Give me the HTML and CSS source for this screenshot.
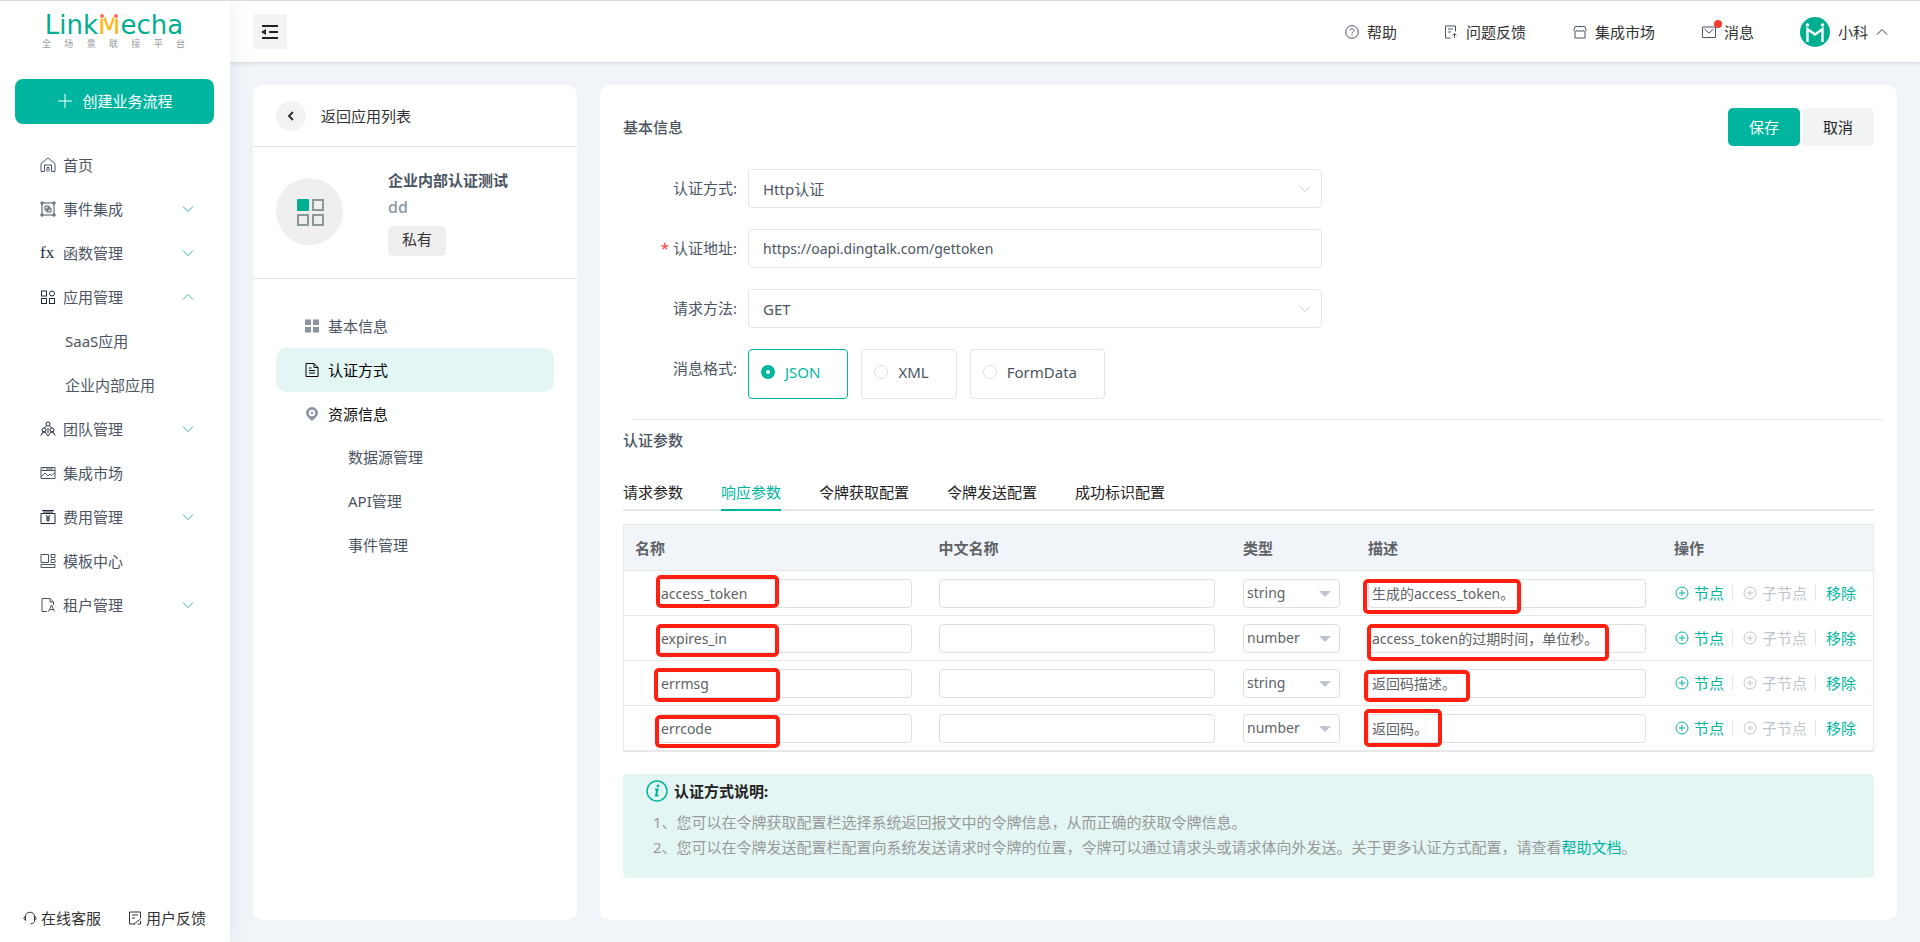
FILE: index.html
```html
<!DOCTYPE html>
<html lang="zh-CN">
<head>
<meta charset="utf-8">
<title>LinkMecha</title>
<link rel="stylesheet" href="styles.css">
</head>
<body>
<svg class="sprite" aria-hidden="true">
  <symbol id="down" viewBox="0 0 12 8"><path d="M1 1.500l5 5 5-5"/></symbol>
  <symbol id="up" viewBox="0 0 12 8"><path d="M1 6.500l5-5 5 5"/></symbol>
  <symbol id="plus-circle" viewBox="0 0 14 14"><circle cx="7" cy="7" r="6"/><path d="M7 4v6M4 7h6"/></symbol>
</svg>
<aside class="sidebar">
  <div class="logo">
    <div class="logo-name">Link<span class="logo-m">M</span>echa</div>
    <div class="logo-tag"><span>全</span><span>场</span><span>景</span><span>联</span><span>接</span><span>平</span><span>台</span></div>
  </div>
  <button class="create" type="button"><svg class="i14" viewBox="0 0 14 14"><path d="M7 0v14M0 7h14"/></svg>创建业务流程</button>
  <nav class="nav">
    <a href="#"><svg class="i16" viewBox="0 0 16 16"><path d="M1 6.500L8 1l7 5.500V14.500h-3.500V8h-7v6.500H1zM7 14.500v-4h2v4"/></svg>首页</a>
    <a href="#"><svg class="i16" viewBox="0 0 16 16"><path d="M3 2h10M3 14h10M2 3v10M14 3v10M1 1h2v2H1zM13 1h2v2h-2zM1 13h2v2H1zM13 13h2v2h-2zM5 5h4v4H5zM7 7h4v4H7z"/></svg>事件集成<svg class="chev"><use href="#down"/></svg></a>
    <a href="#"><span class="fx">fx</span>函数管理<svg class="chev"><use href="#down"/></svg></a>
    <a href="#"><svg class="i16 dark" viewBox="0 0 16 16"><rect x="1.500" y="2" width="5" height="5"/><circle cx="12" cy="4.500" r="2.500"/><rect x="1.500" y="9.500" width="5" height="5"/><rect x="9.500" y="9.500" width="5" height="5"/></svg>应用管理<svg class="chev"><use href="#up"/></svg></a>
    <a class="sub" href="#">SaaS应用</a>
    <a class="sub" href="#">企业内部应用</a>
    <a href="#"><svg class="i16 dark" viewBox="0 0 16 16"><circle cx="8" cy="3" r="2"/><circle cx="4" cy="9" r="2"/><circle cx="12" cy="9" r="2"/><path d="M6.500 4.500L4.500 7M9.500 4.500l2 2.500M1 14.500l2-3.500h2l3 4 3-4h2l2 3.500M8 7v5"/></svg>团队管理<svg class="chev"><use href="#down"/></svg></a>
    <a href="#"><svg class="i16" viewBox="0 0 16 16"><path d="M1 2.500h14v11H1zM1 5.500h14M3 4h1M6 4h7M1 12l4-4 3 3 2-2 1.500 1.500L15 7.500"/></svg>集成市场</a>
    <a href="#"><svg class="i16 dark" viewBox="0 0 16 16"><path d="M2 1.500h12M3 3h10M1 4.500h14v10H1zM6 6l2 2.500L10 6M8 8.500V13M6 9h4M6 11h4"/></svg>费用管理<svg class="chev"><use href="#down"/></svg></a>
    <a href="#"><svg class="i16" viewBox="0 0 16 16"><path d="M1 1.500h7.500v8H1zM11 1.500h4v3h-4zM11 6.500h4v3h-4zM1 11.500h14v3H1z"/></svg>模板中心</a>
    <a href="#"><svg class="i16" viewBox="0 0 16 16"><path d="M7 14.500H2v-13h8l3.500 3.500v3M10 1.500V5h3.500M8.500 14.500L11.500 8l3 6.500M9.500 12.500h4"/></svg>租户管理<svg class="chev"><use href="#down"/></svg></a>
  </nav>
  <div class="side-foot">
    <a href="#"><svg class="i14" viewBox="0 0 14 14"><path d="M2.500 9.500L.7 7.300 2.500 5C3 0 11 0 11.500 5l1.800 2.300-1.800 2.200c0 2-1.500 3.300-4 3.300M2.500 5v4.500M11.500 5v4.500"/></svg>在线客服</a>
    <a href="#"><svg class="i14" viewBox="0 0 14 14"><path d="M7 13H1.500V1h11v6M4 4h6M4 7h3M6 13l6.500-5M9.500 13H12.500v-3"/></svg>用户反馈</a>
  </div>
</aside>
<div class="page">
  <header class="top">
    <button class="fold" type="button" aria-label="收起菜单"><svg viewBox="0 0 18 14"><path d="M1 1h16M8 7h9M1 13h16"/><path class="solid" d="M0 7l5-3v6z"/></svg></button>
    <nav class="top-nav">
      <a href="#"><svg class="i14" viewBox="0 0 14 14"><circle cx="7" cy="7" r="6.300"/><path d="M5 5.500C5 3 9 3 9 5.500 9 7 7 7 7 8.500M7 9.700v1"/></svg>帮助</a>
      <a href="#"><svg class="i14" viewBox="0 0 14 14"><path d="M6.500 13H1.500V1h10v5.500M4 4h5M4 7h3M10.500 13V8.500M8.500 10.500l2-2 2 2"/></svg>问题反馈</a>
      <a href="#"><svg class="i14" viewBox="0 0 14 14"><path d="M2 1.500h10l1 3.500c0 2-3 2-3 0 0 2-3 2-3 0 0 2-3 2-3 0 0 2-3 2-3 0zM2 7v6h10V7"/></svg>集成市场</a>
      <a class="msg" href="#"><svg class="i14" viewBox="0 0 14 14"><path d="M.5 2h13v10.500H.5zM2.500 4L7 8l4.500-4"/></svg>消息</a>
    </nav>
    <button class="user" type="button">
      <svg class="avatar" viewBox="0 0 30 30"><circle class="disc" cx="15" cy="15" r="15"/><path d="M7.500 25V12l7.500 5.500 7.500-5.500v13"/><circle class="head" cx="7.500" cy="8" r="1.800"/><circle class="head" cx="22.500" cy="8" r="1.800"/></svg>小科<svg class="chev"><use href="#up"/></svg>
    </button>
  </header>
  <div class="content">
    <section class="panel app">
      <div class="back">
        <button class="back-btn" type="button" aria-label="返回"><svg viewBox="0 0 8 10"><path d="M6 1L2 5l4 4"/></svg></button>返回应用列表
      </div>
      <div class="summary">
        <div class="app-icon"><svg viewBox="0 0 28 28"><rect class="on" x="1" y="1" width="12" height="12" rx="1"/><rect x="17" y="2" width="10" height="10"/><rect x="2" y="17" width="10" height="10"/><rect x="17" y="17" width="10" height="10"/></svg></div>
        <div class="app-text">
          <h2>企业内部认证测试</h2>
          <p>dd</p>
          <span class="tag">私有</span>
        </div>
      </div>
      <nav class="menu">
        <a href="#"><svg class="i14 fill" viewBox="0 0 14 14"><path d="M0 .5h6v5.500H0zM8 .5h6v5.500H8zM0 8h6v5.500H0zM8 8h6v5.500H8z"/></svg>基本信息</a>
        <a class="active" href="#"><svg class="i14" viewBox="0 0 14 14"><path d="M1 .5h8l4 4v9H1zM9 .5v4h4M4 5h2.500M4 7.500h6M4 10h6"/></svg>认证方式</a>
        <a class="strong" href="#"><svg class="i14 fill" viewBox="0 0 14 14"><path fill-rule="evenodd" d="M7 0a6 6 0 0 1 6 6c0 3-3 5-6 8-3-3-6-5-6-8a6 6 0 0 1 6-6zM7 2.800a3.200 3.200 0 1 0 0 6.400 3.200 3.200 0 0 0 0-6.400z"/><circle cx="7" cy="6" r="1.200"/></svg>资源信息</a>
        <a class="sub" href="#">数据源管理</a>
        <a class="sub" href="#">API管理</a>
        <a class="sub" href="#">事件管理</a>
      </nav>
    </section>
    <main class="panel main">
      <div class="head">
        <h1>基本信息</h1>
        <div class="actions"><button class="save" type="button">保存</button><button class="cancel" type="button">取消</button></div>
      </div>
      <form class="form">
        <div class="row"><label for="auth">认证方式:</label><div class="pick"><select id="auth"><option>Http认证</option></select><svg class="chev"><use href="#down"/></svg></div></div>
        <div class="row"><label class="req" for="url">认证地址:</label><input class="text" id="url" type="text" value="https://oapi.dingtalk.com/gettoken"></div>
        <div class="row"><label for="method">请求方法:</label><div class="pick"><select id="method"><option>GET</option></select><svg class="chev"><use href="#down"/></svg></div></div>
        <div class="row"><span class="label">消息格式:</span>
          <div class="cards">
            <label><input type="radio" name="format" checked><span>JSON</span></label>
            <label><input type="radio" name="format"><span>XML</span></label>
            <label><input type="radio" name="format"><span>FormData</span></label>
          </div>
        </div>
      </form>
      <section class="params">
        <h2>认证参数</h2>
        <div class="tabs" role="tablist">
          <button type="button" role="tab">请求参数</button><button class="active" type="button" role="tab" aria-selected="true">响应参数</button><button type="button" role="tab">令牌获取配置</button><button type="button" role="tab">令牌发送配置</button><button type="button" role="tab">成功标识配置</button>
        </div>
        <table>
          <colgroup><col class="c-name"><col class="c-name"><col class="c-type"><col class="c-desc"><col></colgroup>
          <thead><tr><th>名称</th><th>中文名称</th><th>类型</th><th>描述</th><th>操作</th></tr></thead>
          <tbody>
            <tr>
              <td><div class="cell key"><input type="text" aria-label="名称" value="access_token"><i class="mark m1"></i></div></td>
              <td><div class="cell"><input type="text" aria-label="中文名称"></div></td>
              <td><div class="cell type"><select aria-label="类型"><option>string</option></select></div></td>
              <td><div class="cell"><input type="text" aria-label="描述" value="生成的access_token。"><i class="mark d1"></i></div></td>
              <td><div class="ops"><button type="button"><svg class="i14"><use href="#plus-circle"/></svg>节点</button><button type="button" disabled><svg class="i14"><use href="#plus-circle"/></svg>子节点</button><button type="button">移除</button></div></td>
            </tr>
            <tr>
              <td><div class="cell key"><input type="text" aria-label="名称" value="expires_in"><i class="mark m2"></i></div></td>
              <td><div class="cell"><input type="text" aria-label="中文名称"></div></td>
              <td><div class="cell type"><select aria-label="类型"><option>number</option></select></div></td>
              <td><div class="cell"><input type="text" aria-label="描述" value="access_token的过期时间，单位秒。"><i class="mark d2"></i></div></td>
              <td><div class="ops"><button type="button"><svg class="i14"><use href="#plus-circle"/></svg>节点</button><button type="button" disabled><svg class="i14"><use href="#plus-circle"/></svg>子节点</button><button type="button">移除</button></div></td>
            </tr>
            <tr>
              <td><div class="cell key"><input type="text" aria-label="名称" value="errmsg"><i class="mark m3"></i></div></td>
              <td><div class="cell"><input type="text" aria-label="中文名称"></div></td>
              <td><div class="cell type"><select aria-label="类型"><option>string</option></select></div></td>
              <td><div class="cell"><input type="text" aria-label="描述" value="返回码描述。"><i class="mark d3"></i></div></td>
              <td><div class="ops"><button type="button"><svg class="i14"><use href="#plus-circle"/></svg>节点</button><button type="button" disabled><svg class="i14"><use href="#plus-circle"/></svg>子节点</button><button type="button">移除</button></div></td>
            </tr>
            <tr>
              <td><div class="cell key"><input type="text" aria-label="名称" value="errcode"><i class="mark m4"></i></div></td>
              <td><div class="cell"><input type="text" aria-label="中文名称"></div></td>
              <td><div class="cell type"><select aria-label="类型"><option>number</option></select></div></td>
              <td><div class="cell"><input type="text" aria-label="描述" value="返回码。"><i class="mark d4"></i></div></td>
              <td><div class="ops"><button type="button"><svg class="i14"><use href="#plus-circle"/></svg>节点</button><button type="button" disabled><svg class="i14"><use href="#plus-circle"/></svg>子节点</button><button type="button">移除</button></div></td>
            </tr>
          </tbody>
        </table>
        <div class="notice">
          <h3><svg viewBox="0 0 22 22"><circle cx="11" cy="11" r="10"/><path class="bold" d="M9 9.500h2.500L10 15.500h2.500"/><circle class="dot" cx="12" cy="6" r="1.400"/></svg>认证方式说明:</h3>
          <p>1、您可以在令牌获取配置栏选择系统返回报文中的令牌信息，从而正确的获取令牌信息。</p>
          <p>2、您可以在令牌发送配置栏配置向系统发送请求时令牌的位置，令牌可以通过请求头或请求体向外发送。关于更多认证方式配置，请查看<a href="#">帮助文档</a>。</p>
        </div>
      </section>
    </main>
  </div>
</div>
</body>
</html>
```
FILE: styles.css
```css
* { box-sizing: border-box; }
body {
  margin: 0;
  min-height: 100vh;
  display: flex;
  border-top: 1px solid #d9d9d9;
  background: #f1f5fa;
  color: #4b5563;
  font: 15px/22px "Noto Sans", "Noto Sans CJK SC", sans-serif;
}
h1, h2, h3, p { margin: 0; font-size: 15px; font-weight: 500; }
a { color: inherit; text-decoration: none; }
button, input, select { font: inherit; color: inherit; margin: 0; }
button { border: 0; background: none; padding: 0; }
svg { flex: none; fill: none; stroke: currentColor; stroke-width: 1; }
.sprite { position: absolute; width: 0; height: 0; }
.i14 { width: 14px; height: 14px; }
.i16 { width: 16px; height: 16px; }
.dark { color: #1f2937; }
.chev { width: 12px; height: 8px; }
.fill { fill: #8a94a3; stroke: none; }

.sidebar {
  position: relative;
  flex: none;
  width: 230px;
  display: flex;
  flex-direction: column;
  background: #fff;
  box-shadow: 4px 0 20px rgba(20, 90, 80, .07);
}
.logo { padding: 10px 41px 0 39px; }
.logo-name {
  display: flex;
  justify-content: center;
  font: 400 26px/28px "DejaVu Sans", sans-serif;
  color: #00ae90;
}
.logo-m { position: relative; color: #fbb612; }
.logo-m::before, .logo-m::after {
  content: "";
  position: absolute;
  top: 3px;
  left: 2px;
  width: 4px;
  height: 4px;
  border-radius: 50%;
  background: #ff6b5e;
  box-shadow: 0 0 0 1px #fff;
}
.logo-m::after { left: auto; right: 2px; }
.logo-tag {
  display: flex;
  justify-content: space-between;
  padding: 0 4px 0 3px;
  font-size: 9px;
  line-height: 10px;
  color: #999;
}
.create {
  display: flex;
  align-items: center;
  justify-content: center;
  gap: 10px;
  height: 45px;
  margin: 30px 16px 19px 15px;
  padding: 0 0 2px 2px;
  border-radius: 8px;
  background: #00b59f;
  color: #fff;
}
.nav { flex: 1; }
.nav a {
  display: flex;
  align-items: center;
  gap: 7px;
  height: 44px;
  padding: 0 36px 0 40px;
}
.nav .sub { padding-left: 65px; }
.nav .chev { margin-left: auto; color: #2fb8a5; }
.fx { width: 16px; font: 17px/20px "Liberation Serif", serif; color: #1f2937; }
.side-foot {
  display: flex;
  justify-content: space-between;
  padding: 0 24px 13px 23px;
  color: #333;
}
.side-foot a { display: flex; align-items: center; gap: 4px; }

.page { flex: 1; min-width: 0; display: flex; flex-direction: column; }
.top {
  display: flex;
  align-items: center;
  justify-content: space-between;
  height: 61px;
  padding: 0 32px 0 23px;
  background: #fff;
  color: #333;
  box-shadow: 0 1px 4px rgba(0, 40, 40, .16);
}
.fold {
  display: grid;
  place-items: center;
  width: 34px;
  height: 35px;
  border-radius: 3px;
  background: #f1f3f5;
  color: #1f2328;
}
.fold svg { width: 18px; height: 14px; stroke-width: 2; }
.fold .solid { fill: currentColor; stroke: none; }
.top-nav { display: flex; gap: 47px; margin-left: auto; }
.top-nav a { display: flex; align-items: center; gap: 8px; }
.top-nav svg { color: #4b5563; }
.msg { position: relative; }
.msg::after {
  content: "";
  position: absolute;
  left: 12px;
  top: -1px;
  width: 8px;
  height: 8px;
  border-radius: 50%;
  background: #f23c30;
}
.user { display: flex; align-items: center; gap: 8px; margin-left: 46px; }
.avatar { width: 30px; height: 30px; color: #fff; stroke-width: 2.4; }
.avatar .disc { fill: #00ae90; stroke: none; }
.avatar .head { fill: #fff; stroke: none; }

.content { flex: 1; display: flex; gap: 23px; padding: 23px 23px 22px; }
.panel { border-radius: 10px; background: #fff; }
.app { flex: none; width: 324px; color: #4b5563; }
.back {
  display: flex;
  align-items: center;
  gap: 15px;
  height: 62px;
  padding: 0 23px;
  border-bottom: 1px solid #e1e3ea;
  color: #333;
}
.back-btn {
  display: grid;
  place-items: center;
  width: 30px;
  height: 30px;
  border-radius: 50%;
  background: #f1f3f5;
}
.back-btn svg { width: 8px; height: 10px; stroke-width: 2; }
.summary {
  display: flex;
  gap: 45px;
  padding: 22px 23px;
  border-bottom: 1px solid #e1e3ea;
}
.app-icon {
  display: grid;
  place-items: center;
  width: 67px;
  height: 67px;
  margin: 9px 0;
  border-radius: 50%;
  background: #efefef;
  color: #8c9896;
}
.app-icon svg { width: 28px; height: 28px; stroke-width: 2; }
.app-icon .on { fill: #00ae90; stroke: none; }
.app-text h2 { font-weight: 700; }
.app-text p { margin: 5px 0 8px; font-size: 16px; color: #8b96a5; }
.tag {
  display: inline-block;
  padding: 2px 14px 6px;
  border-radius: 5px;
  background: #efefef;
  color: #333;
}
.menu { padding: 25px 23px; }
.menu a {
  display: flex;
  align-items: center;
  gap: 9px;
  height: 44px;
  padding-left: 29px;
  border-radius: 10px;
}
.menu .active { background: #e3f6f4; color: #000; }
.menu .strong { height: 43px; color: #111; }
.menu .sub { padding-left: 72px; }

.main { flex: 1; min-width: 0; padding: 23px; }
.head { display: flex; align-items: center; justify-content: space-between; }
.head h1, .params h2 { font-weight: 500; }
.actions { display: flex; gap: 2px; }
.actions button { width: 72px; height: 38px; border-radius: 5px; }
.save { background: #00b59f; color: #fff; }
.cancel { background: #f2f3f5; color: #222; }
.form {
  display: flex;
  flex-direction: column;
  gap: 21px;
  margin: 23px -10px 0 9px;
  padding-bottom: 20px;
  border-bottom: 1px solid #e4e6ea;
}
.row { display: flex; align-items: flex-start; gap: 11px; }
.row > label, .label { width: 105px; line-height: 39px; text-align: right; }
.req::before { content: "* "; color: #f23c30; }
.pick { position: relative; flex: 1; max-width: 574px; display: flex; }
.pick select, .text {
  flex: 1;
  max-width: 574px;
  height: 39px;
  padding: 0 14px;
  border: 1px solid #e2e4ea;
  border-radius: 4px;
  background: #fff;
  appearance: none;
}
.text { font-size: 14px; }
.pick .chev { position: absolute; right: 11px; top: 16px; color: #c0c4cc; pointer-events: none; }
.cards { display: flex; gap: 13px; }
.cards label {
  display: flex;
  align-items: center;
  gap: 10px;
  height: 50px;
  padding: 0 27px 4px 12px;
  border: 1px solid #e2e4ea;
  border-radius: 4px;
}
.cards label:has(:checked) { border-color: #00b59f; color: #00b59f; }
.cards input {
  appearance: none;
  width: 14px;
  height: 14px;
  border: 1px solid #dcdfe6;
  border-radius: 50%;
}
.cards input:checked { border: 5px solid #00b59f; }

.params h2 { padding-top: 9px; }
.tabs {
  display: flex;
  gap: 38px;
  margin-top: 22px;
  border-bottom: 2px solid #e2e7ec;
  color: #222;
}
.tabs button { height: 38px; padding-top: 2px; margin-bottom: -2px; border-bottom: 2px solid transparent; }
.tabs .active { color: #00b59f; border-color: #00b59f; }
table {
  width: 100%;
  margin-top: 13px;
  table-layout: fixed;
  border: 1px solid #e6e8ea;
  border-spacing: 0;
}
.c-name { width: 24.3%; }
.c-type { width: 10%; }
.c-desc { width: 24.5%; }
th {
  height: 46px;
  padding: 0 12px 0 11px;
  background: #f1f5fa;
  text-align: left;
  font-weight: 700;
  color: #606266;
}
th, td { border-bottom: 1px solid #e6e8ea; }
td { height: 45px; padding: 0 16px 0 11px; color: #606266; }
th:nth-child(n+3), td:nth-child(n+3) { padding-left: 12px; }
.cell { position: relative; display: flex; }
.key { margin-left: 22px; }
.cell input, .cell select {
  flex: 1;
  min-width: 0;
  height: 29px;
  padding: 0 3px;
  border: 1px solid #dcdfe6;
  border-radius: 4px;
  background: #fff;
  font-size: 14px;
  appearance: none;
}
.type::after {
  content: "";
  position: absolute;
  right: 9px;
  top: 12px;
  border: 6px solid transparent;
  border-top-color: #c0c4cc;
  border-bottom: 0;
}
td:nth-child(5) { padding-left: 13px; padding-right: 0; }
.mark { position: absolute; border: 4px solid #ff2012; border-radius: 5px; pointer-events: none; }
.m1 { left: -1px; top: -4px; width: 123px; height: 33px; }
.m2 { left: -1px; top: 0; width: 123px; height: 33px; }
.m3 { left: -3px; top: -1px; width: 126px; height: 34px; }
.m4 { left: -2px; top: 1px; width: 125px; height: 33px; }
.d1 { left: -5px; top: 0; width: 158px; height: 35px; }
.d2 { left: -1px; top: 0; width: 242px; height: 37px; }
.d3 { left: -4px; top: 1px; width: 106px; height: 32px; }
.d4 { left: -4px; top: -5px; width: 78px; height: 38px; }
.ops { display: flex; align-items: center; color: #00b59f; }
.ops button { display: flex; align-items: center; gap: 5px; line-height: 16px; padding-right: 8px; }
.ops button + button { border-left: 1px solid #e2e4ea; padding-left: 10px; }
.ops button:disabled { color: #c0c4cc; }

.notice {
  margin-top: 22px;
  padding: 6px 23px 18px;
  border-radius: 5px;
  background: #e3f6f4;
}
.notice h3 { display: flex; align-items: center; gap: 6px; margin-bottom: 8px; font-weight: 700; color: #222; }
.notice h3 svg { width: 22px; height: 22px; color: #00b59f; stroke-width: 1.5; }
.notice .bold { stroke-width: 2; }
.notice .dot { fill: currentColor; stroke: none; }
.notice p { padding-left: 7px; line-height: 25px; font-weight: 400; color: #999; }
.notice a { color: #00b59f; }
```
